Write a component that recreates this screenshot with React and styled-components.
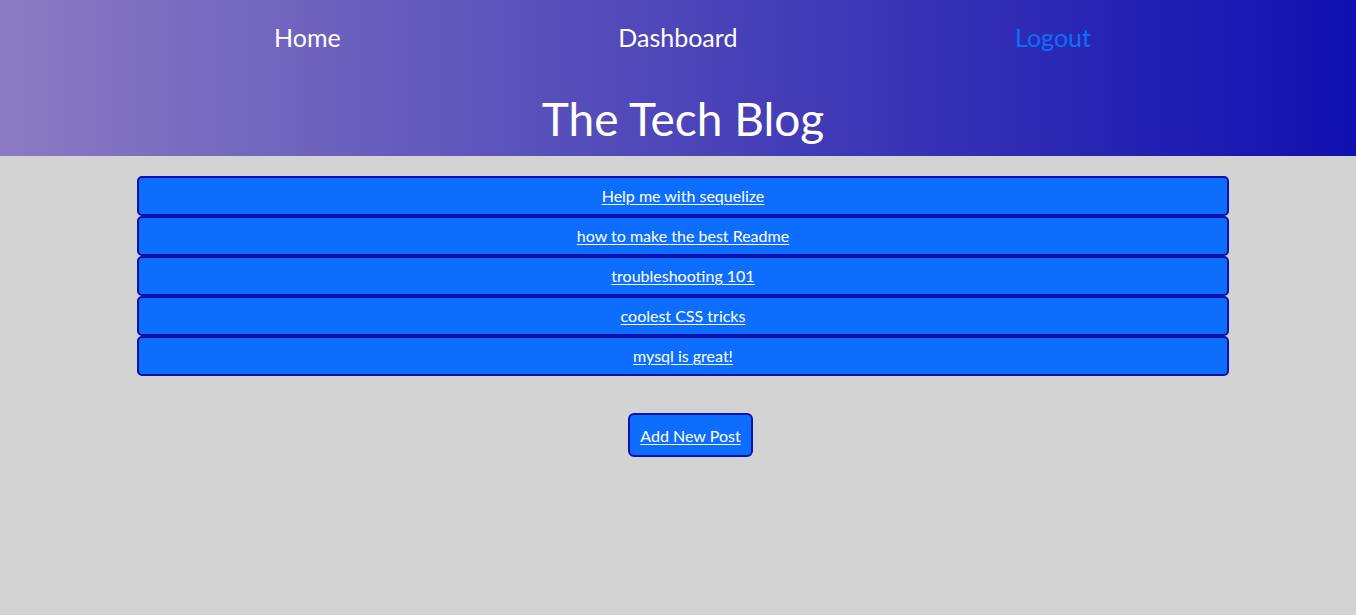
import React from "react";
import styled, { createGlobalStyle } from "styled-components";

const Global = createGlobalStyle`
  html, body { margin: 0; padding: 0; }
  body {
    background: #d3d3d3;
    font-family: Lato, "Liberation Sans", sans-serif;
    min-height: 615px;
  }
`;

const Header = styled.header`
  height: 156px;
  background: linear-gradient(to right, #8a7bc2, #1010b0);
  display: flex;
  flex-direction: column;
  box-sizing: border-box;
  padding-top: 21px;
`;

const Nav = styled.nav`
  display: flex;
  justify-content: space-between;
  align-items: center;
  padding: 0 265px 0 274px;
`;

const NavLink = styled.a`
  font-size: 25px;
  line-height: 32px;
  color: ${(p) => (p.$active ? "#0d6efd" : "#ffffff")};
  text-decoration: none;
`;

const Title = styled.h1`
  margin: 0;
  margin-top: 38px;
  text-align: center;
  color: #ffffff;
  font-weight: 400;
  font-size: 46px;
  line-height: 56px;
  padding-left: 10px;
`;

const Main = styled.main`
  padding: 20px 127px 0 137px;
  display: flex;
  flex-direction: column;
`;

const PostList = styled.ul`
  list-style: none;
  margin: 0;
  padding: 0;
  display: flex;
  flex-direction: column;
`;

const PostRow = styled.li`
  height: 40px;
  box-sizing: border-box;
  background: #0d6efd;
  border: 2px solid #1010b0;
  border-radius: 5px;
  display: flex;
  align-items: center;
  justify-content: center;
  padding-bottom: 1px;
`;

const PostLink = styled.a`
  color: #ffffff;
  font-size: 16px;
  text-decoration: underline;
  text-underline-offset: 2px;
`;

const Actions = styled.div`
  display: flex;
  justify-content: center;
  margin-top: 37px;
  padding-left: 15px;
`;

const AddButton = styled.button`
  height: 44px;
  box-sizing: border-box;
  padding: 0 10px;
  background: #0d6efd;
  border: 2px solid #1010b0;
  border-radius: 6px;
  color: #ffffff;
  font-family: inherit;
  font-size: 16px;
  text-decoration: underline;
  text-underline-offset: 2px;
  cursor: pointer;
`;

const posts = [
  "Help me with sequelize",
  "how to make the best Readme",
  "troubleshooting 101",
  "coolest CSS tricks",
  "mysql is great!",
];

export default function App() {
  return (
    <>
      <Global />
      <Header>
        <Nav>
          <NavLink href="#">Home</NavLink>
          <NavLink href="#">Dashboard</NavLink>
          <NavLink href="#" $active>Logout</NavLink>
        </Nav>
        <Title>The Tech Blog</Title>
      </Header>
      <Main>
        <PostList>
          {posts.map((p) => (
            <PostRow key={p}>
              <PostLink href="#">{p}</PostLink>
            </PostRow>
          ))}
        </PostList>
        <Actions>
          <AddButton>Add New Post</AddButton>
        </Actions>
      </Main>
    </>
  );
}
